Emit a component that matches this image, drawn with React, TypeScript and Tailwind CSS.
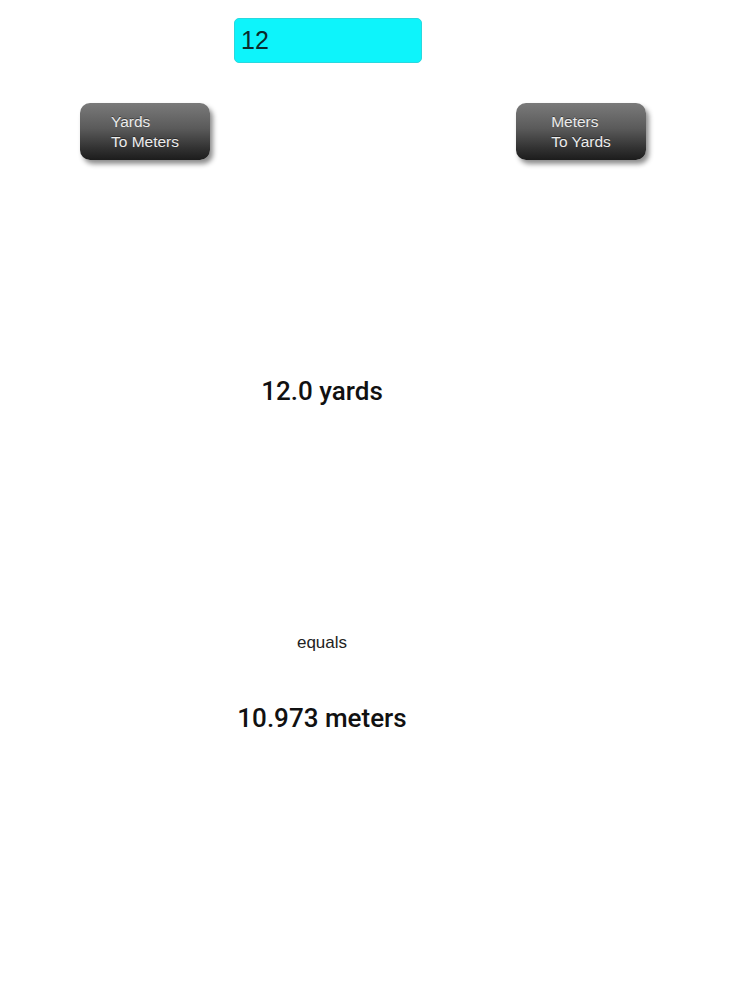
import React, { useState } from 'react';

const YARD_IN_METERS = 0.9144;

function ConvertButton({ top, bottom, onClick }: { top: string; bottom: string; onClick: () => void }) {
  return (
    <button
      onClick={onClick}
      className="flex h-[57px] w-[130px] items-center justify-center rounded-[10px] bg-[linear-gradient(to_bottom,#7a7a7a_0%,#5a5a5a_45%,#313131_80%,#1c1c1c_100%)] shadow-[3px_4px_5px_rgba(0,0,0,0.45)]"
    >
      <span className="flex flex-col items-start text-[15.5px] leading-[20px] text-[#ececec] [text-shadow:0_-1px_0_rgba(0,0,0,0.4)]">
        <span>{top}</span>
        <span>{bottom}</span>
      </span>
    </button>
  );
}

export default function App() {
  const [value, setValue] = useState('12');
  const [mode, setMode] = useState<'y2m' | 'm2y'>('y2m');

  const num = parseFloat(value) || 0;
  const from = mode === 'y2m' ? `${num.toFixed(1)} yards` : `${num.toFixed(1)} meters`;
  const to =
    mode === 'y2m'
      ? `${(num * YARD_IN_METERS).toFixed(3)} meters`
      : `${(num / YARD_IN_METERS).toFixed(3)} yards`;

  return (
    <div className="min-h-screen w-[750px] bg-white font-['Liberation_Sans',Arial,sans-serif] text-black">
      <div className="pt-[18px] pl-[234px]">
        <input
          value={value}
          onChange={(e) => setValue(e.target.value)}
          className="block h-[45px] w-[188px] rounded-[5px] border border-[#2ad8de] bg-[#0df4fb] px-[6px] text-[25px] text-[#0a2a2c] outline-none"
        />
      </div>

      <div className="flex justify-between pt-[40px] pl-[80px] pr-[104px]">
        <ConvertButton top="Yards" bottom="To Meters" onClick={() => setMode('y2m')} />
        <ConvertButton top="Meters" bottom="To Yards" onClick={() => setMode('m2y')} />
      </div>

      <div className="flex w-[644px] flex-col items-center">
        <div className="mt-[216px] font-['Roboto',sans-serif] text-[26px] font-medium leading-[30px] text-[#111]">{from}</div>
        <div className="mt-[227px] text-[17px] leading-[20px] text-[#222]">equals</div>
        <div className="mt-[50px] font-['Roboto',sans-serif] text-[26px] font-medium leading-[30px] text-[#111]">{to}</div>
      </div>
    </div>
  );
}
